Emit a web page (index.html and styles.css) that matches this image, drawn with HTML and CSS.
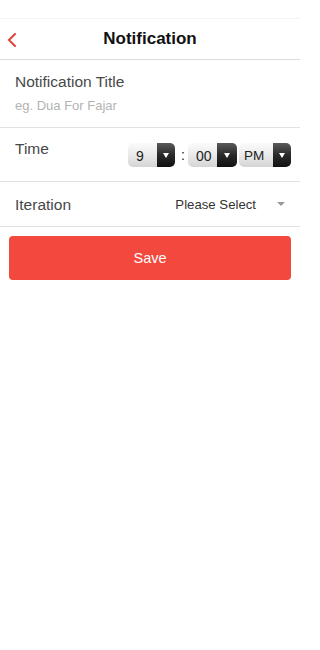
FILE: index.html
```html
<!DOCTYPE html>
<html>
<head>
<meta charset="utf-8">
<link rel="stylesheet" href="styles.css">
</head>
<body>
<div class="screen">
  <div class="status"></div>
  <header class="nav">
    <span class="back">
      <svg width="10" height="14" viewBox="0 0 10 14"><polyline points="8,1 2,7 8,13" fill="none" stroke="#e2433b" stroke-width="2" stroke-linecap="round" stroke-linejoin="round"/></svg>
    </span>
    <h1 class="nav-title">Notification</h1>
    <span></span>
  </header>
  <section class="field">
    <div class="label">Notification Title</div>
    <div class="placeholder">eg. Dua For Fajar</div>
  </section>
  <section class="time-row">
    <div class="label">Time</div>
    <div class="pickers">
      <div class="picker">
        <span class="pv pv-h">9</span><span class="pd"><i class="tri"></i></span>
      </div>
      <span class="colon">:</span>
      <div class="picker">
        <span class="pv pv-m">00</span><span class="pd pd-m"><i class="tri"></i></span>
      </div>
      <div class="picker picker-ap">
        <span class="pv pv-ap">PM</span><span class="pd"><i class="tri"></i></span>
      </div>
    </div>
  </section>
  <section class="iter-row">
    <div class="label">Iteration</div>
    <div class="select">
      <span class="select-text">Please Select</span>
      <i class="caret"></i>
    </div>
  </section>
  <div class="save-wrap">
    <button class="save">Save</button>
  </div>
</div>
</body>
</html>
```
FILE: styles.css
```css
html, body {
  margin: 0;
  padding: 0;
  background: #ffffff;
}
body {
  font-family: "Liberation Sans", Arial, sans-serif;
  color: #444;
}
.screen {
  width: 300px;
  min-height: 650px;
  background: #fff;
}
.status {
  height: 18px;
  border-bottom: 1px solid #f3f3f3;
}
.nav {
  height: 40px;
  display: grid;
  grid-template-columns: 40px 1fr 40px;
  align-items: center;
  border-bottom: 1px solid #dcdcdc;
}
.back {
  display: flex;
  align-items: center;
  padding-left: 7px;
  padding-top: 1px;
}
.nav-title {
  margin: 0;
  text-align: center;
  font-size: 17px;
  font-weight: bold;
  color: #111;
  line-height: 20px;
}
.field {
  padding: 13px 15px 13px;
  border-bottom: 1px solid #e2e2e2;
}
.label {
  font-size: 15.5px;
  line-height: 18px;
  color: #484848;
}
.placeholder {
  margin-top: 7px;
  font-size: 13px;
  line-height: 16px;
  color: #b3b3b3;
}
.time-row {
  display: flex;
  justify-content: space-between;
  align-items: flex-start;
  padding: 12px 9px 14px 15px;
  border-bottom: 1px solid #e2e2e2;
}
.pickers {
  display: flex;
  align-items: center;
  margin-top: 3px;
}
.picker {
  display: flex;
  height: 24px;
}
.picker-ap {
  margin-left: 2px;
}
.pv {
  box-sizing: border-box;
  width: 29px;
  padding-left: 8px;
  padding-top: 1px;
  font-size: 14px;
  line-height: 24px;
  color: #222;
  background: linear-gradient(#fbfbfb, #ececec 45%, #d4d4d4);
  border-radius: 5px 0 0 5px;
}
.pv-ap {
  width: 34px;
  padding-left: 5px;
  font-size: 13.5px;
}
.pd {
  width: 18px;
  display: flex;
  align-items: center;
  justify-content: center;
  background: linear-gradient(#5a5a5a, #2a2a2a 50%, #111);
  border-radius: 0 5px 5px 0;
}
.pd-m {
  width: 20px;
}
.tri {
  width: 0;
  height: 0;
  border-left: 3px solid transparent;
  border-right: 3px solid transparent;
  border-top: 5px solid #fff;
}
.colon {
  font-size: 14px;
  color: #222;
  margin: 0 3px 0 6px;
  line-height: 24px;
}
.iter-row {
  height: 44px;
  display: flex;
  justify-content: space-between;
  align-items: center;
  padding: 0 15px 0 15px;
  border-bottom: 1px solid #e2e2e2;
}
.iter-row .label {
  padding-top: 2px;
}
.select {
  display: flex;
  align-items: center;
}
.select-text {
  font-size: 13.2px;
  color: #333;
}
.caret {
  margin-left: 21px;
  width: 0;
  height: 0;
  border-left: 4.5px solid transparent;
  border-right: 4.5px solid transparent;
  border-top: 4px solid #9a9a9a;
}
.save-wrap {
  padding: 9px 9px 0;
}
.save {
  display: block;
  width: 100%;
  height: 44px;
  border: none;
  border-radius: 4px;
  background: #f2483e;
  color: #fff;
  font-family: "Liberation Sans", Arial, sans-serif;
  font-size: 14.5px;
  padding: 0;
}
```
